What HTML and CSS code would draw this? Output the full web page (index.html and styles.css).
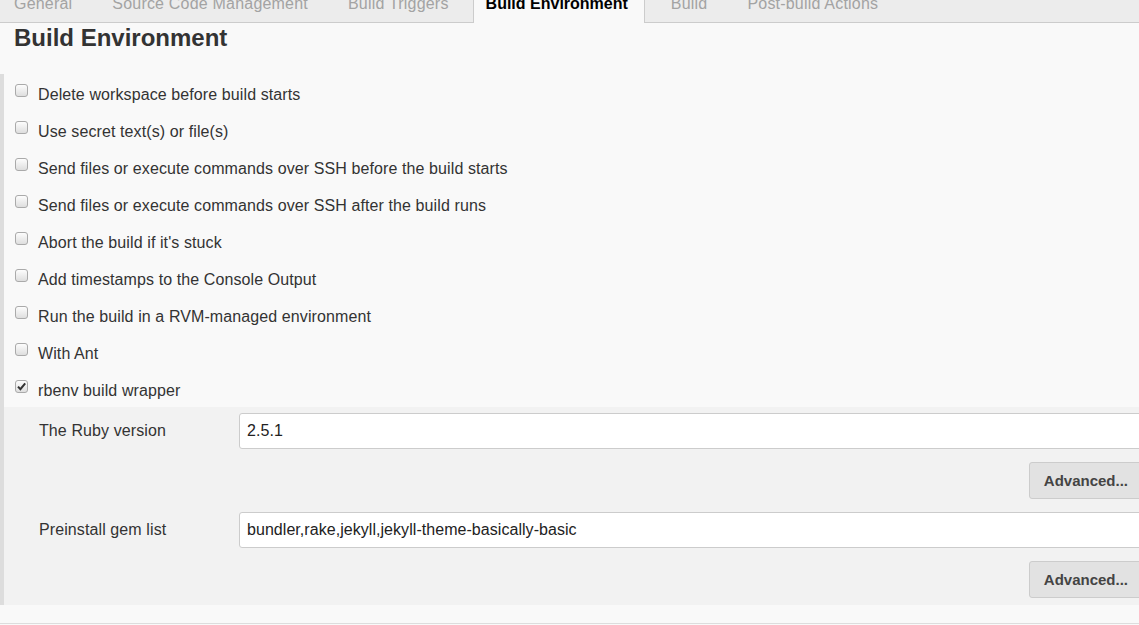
FILE: index.html
```html
<!DOCTYPE html>
<html lang="en">
<head>
    <meta charset="UTF-8">
    <title>Build Environment</title>
    <link rel="stylesheet" href="styles.css">
</head>
<body>
    <div class="page">
        <!-- config tabs -->
        <div class="tabbar">
            <span class="tab">General</span>
            <span class="tab">Source Code Management</span>
            <span class="tab">Build Triggers</span>
            <span class="tab active">Build Environment</span>
            <span class="tab">Build</span>
            <span class="tab">Post-build Actions</span>
        </div>

        <h1 class="section-title">Build Environment</h1>

        <div class="section">
            <label class="check-row"><span class="box"></span>Delete workspace before build starts</label>
            <label class="check-row"><span class="box"></span>Use secret text(s) or file(s)</label>
            <label class="check-row"><span class="box"></span>Send files or execute commands over SSH before the build starts</label>
            <label class="check-row"><span class="box"></span>Send files or execute commands over SSH after the build runs</label>
            <label class="check-row"><span class="box"></span>Abort the build if it's stuck</label>
            <label class="check-row"><span class="box"></span>Add timestamps to the Console Output</label>
            <label class="check-row"><span class="box"></span>Run the build in a RVM-managed environment</label>
            <label class="check-row"><span class="box"></span>With Ant</label>
            <label class="check-row">
                <span class="box checked">
                    <svg width="11" height="11" viewBox="0 0 11 11"><path d="M2 5.6 L4.4 8.2 L9.2 2.4" fill="none" stroke="#333" stroke-width="2"/></svg>
                </span>rbenv build wrapper
            </label>

            <!-- rbenv options -->
            <div class="nested">
                <div class="entry">
                    <span class="entry-label">The Ruby version</span>
                    <input class="text-input" type="text" value="2.5.1">
                </div>
                <div class="btn-row"><button class="btn">Advanced...</button></div>
                <div class="entry">
                    <span class="entry-label">Preinstall gem list</span>
                    <input class="text-input" type="text" value="bundler,rake,jekyll,jekyll-theme-basically-basic">
                </div>
                <div class="btn-row"><button class="btn">Advanced...</button></div>
            </div>
        </div>

        <div class="next-section"></div>
    </div>
</body>
</html>
```

FILE: styles.css
```css
html, body {
    overflow: hidden;
}

body {
    margin: 0;
    background-color: #f9f9f9;
    font-family: "Liberation Sans", Arial, sans-serif;
    color: #333;
}

.page {
    width: 1143px;
}

.tabbar {
    display: flex;
    gap: 16px;
    height: 33px;
    margin-top: -10px;
    padding-left: 2px;
    background-color: #ececec;
    border-bottom: 1px solid #ccc;
    box-sizing: border-box;
}

.tab {
    padding: 5px 12px 0;
    font-size: 16px;
    line-height: 18px;
    letter-spacing: 0.2px;
    color: #a3a3a3;
}

.tab.active {
    margin-left: -4px;
    padding-right: 16px;
    color: #000;
    font-weight: bold;
    letter-spacing: 0;
    background-color: #f9f9f9;
    border-left: 1px solid #ccc;
    border-right: 1px solid #ccc;
    height: 33px;
    box-sizing: border-box;
}

.tab.active + .tab {
    margin-left: -2px;
}

.section-title {
    margin: 1px 0 0 14px;
    font-size: 24px;
    line-height: 28px;
    font-weight: bold;
    color: #333;
}

.section {
    margin-top: 22px;
    border-left: 4px solid #ddd;
}

.check-row {
    display: flex;
    align-items: flex-start;
    height: 37px;
    padding-top: 12px;
    box-sizing: border-box;
    font-size: 16px;
    line-height: 18px;
    letter-spacing: 0.1px;
}

.box {
    width: 13px;
    height: 13px;
    margin: -2px 10px 0 11px;
    border: 1px solid #aaa;
    border-radius: 3px;
    background: linear-gradient(#fdfdfd, #dedede);
    box-sizing: border-box;
    display: flex;
    align-items: center;
    justify-content: center;
}

.box svg {
    display: block;
}

.nested {
    background-color: #f2f2f2;
    padding: 6px 0 7px;
}

.entry {
    display: flex;
    align-items: center;
}

.entry-label {
    width: 200px;
    padding-left: 35px;
    font-size: 16px;
    line-height: 18px;
    letter-spacing: 0.1px;
}

.text-input {
    flex: 1;
    height: 36px;
    padding: 0 7px;
    border: 1px solid #ccc;
    border-radius: 3px;
    background-color: #fff;
    font-family: "Liberation Sans", Arial, sans-serif;
    font-size: 16px;
    letter-spacing: 0.05px;
    color: #222;
    box-sizing: border-box;
    outline: none;
}

.btn-row {
    display: flex;
    justify-content: flex-end;
    margin: 13px 0;
}

.nested .btn-row:last-child {
    margin-bottom: 0;
}

.btn {
    height: 37px;
    padding: 0 14px;
    background-color: #e2e2e2;
    border: 1px solid #ccc;
    border-radius: 3px;
    font-family: "Liberation Sans", Arial, sans-serif;
    font-size: 15px;
    font-weight: bold;
    color: #444;
}

.next-section {
    margin-top: 18px;
    border-top: 1px solid #ddd;
    height: 20px;
}
```
